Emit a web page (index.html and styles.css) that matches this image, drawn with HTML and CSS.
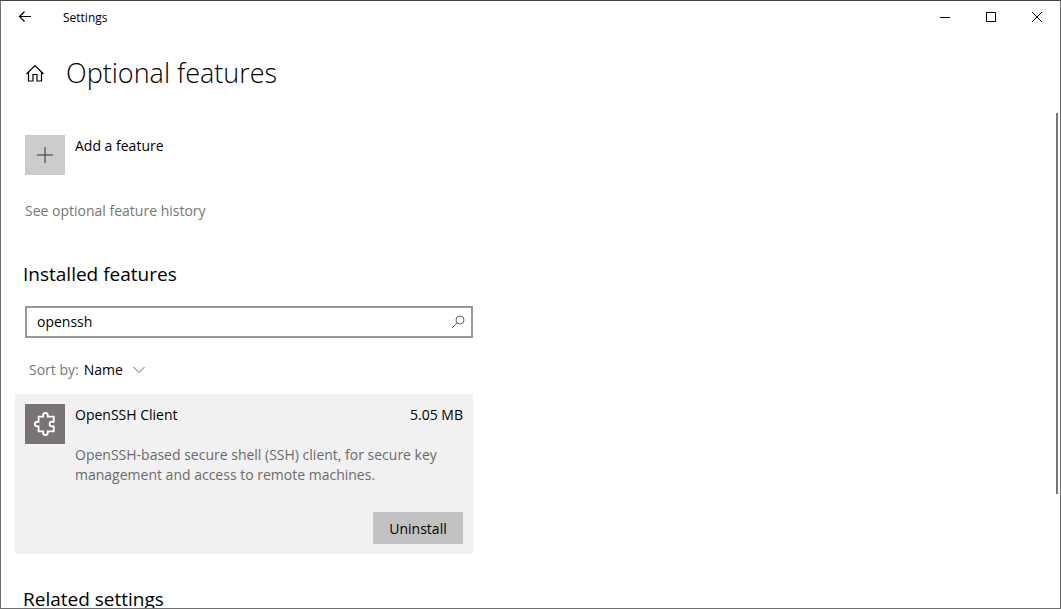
FILE: index.html
```html
<!DOCTYPE html>
<html lang="en">
<head>
<meta charset="utf-8">
<title>Settings</title>
<link rel="stylesheet" href="styles.css">
</head>
<body>
<div class="window">
  <header class="titlebar">
    <button class="back" aria-label="Back">
      <svg width="14" height="12" viewBox="0 0 14 12"><path d="M13 5.500H1.500M6.500 .5L1.500 5.500L6.500 10.500"/></svg>
    </button>
    <span class="app-name">Settings</span>
    <div class="caption-buttons">
      <button class="caption" aria-label="Minimize"><svg width="10" height="10" viewBox="0 0 10 10"><path d="M0 5.500H10"/></svg></button>
      <button class="caption" aria-label="Maximize"><svg width="10" height="10" viewBox="0 0 10 10"><path d="M.5 .5H9.500V9.500H.5Z"/></svg></button>
      <button class="caption" aria-label="Close"><svg width="10" height="10" viewBox="0 0 10 10"><path d="M0 0L10 10M10 0L0 10"/></svg></button>
    </div>
  </header>

  <div class="page-head">
    <button class="home" aria-label="Home">
      <svg width="20" height="18" viewBox="0 0 20 18"><path d="M1.500 10L10 1.500L18.500 10M3.500 8.500V17H8V10.500H12V17H16.500V8.500"/></svg>
    </button>
    <h1 class="title">Optional features</h1>
  </div>

  <div class="body">
    <main class="content">
      <button class="add-feature">
        <span class="tile tile-add"><svg width="16" height="16" viewBox="0 0 16 16"><path d="M0 8H16M8 0V16"/></svg></span>
        <span class="tile-label">Add a feature</span>
      </button>
      <a class="history" href="#">See optional feature history</a>

      <h2 class="section-title">Installed features</h2>
      <div class="search">
        <input class="search-input" type="text" value="openssh" aria-label="Search installed features">
        <button class="search-button" aria-label="Search">
          <svg width="14" height="14" viewBox="0 0 14 14"><circle cx="9" cy="5" r="4"/><path d="M6.200 7.800L1 13"/></svg>
        </button>
      </div>
      <div class="sort">
        <label class="sort-label" for="sort">Sort by:</label>
        <select class="sort-select" id="sort"><option>Name</option></select>
        <svg class="chevron" width="12" height="8" viewBox="0 0 12 8"><path d="M.5 1L6 6.500L11.500 1"/></svg>
      </div>

      <article class="feature">
        <span class="tile tile-feature">
          <svg width="22" height="26" viewBox="0 0 24 28"><path d="M5 6H10V4.500A2.500 2.500 0 0 1 15 4.500V6H21.500V11.500H19.500A2.500 2.500 0 0 0 19.500 16.500H21.500V22H15V23.500A2.500 2.500 0 0 1 10 23.500V22H5V16.500H3.500A2.500 2.500 0 0 1 3.500 11.500H5Z"/></svg>
        </span>
        <div class="feature-info">
          <div class="feature-head"><span>OpenSSH Client</span><span>5.05 MB</span></div>
          <p class="description">OpenSSH-based secure shell (SSH) client, for secure key management and access to remote machines.</p>
          <button class="uninstall">Uninstall</button>
        </div>
      </article>

      <h2 class="section-title related">Related settings</h2>
    </main>
    <div class="scroll-track"><div class="scroll-thumb"></div></div>
  </div>
</div>
</body>
</html>
```
FILE: styles.css
```css
* {
  box-sizing: border-box;
}

body {
  margin: 0;
  font: 14px/20px "Segoe UI", "Open Sans", "Noto Sans", sans-serif;
  color: #000;
}

button,
input,
select {
  margin: 0;
  padding: 0;
  border: 0;
  background: none;
  color: inherit;
  font: inherit;
}

svg {
  display: block;
  flex: none;
  fill: none;
  stroke: #000;
}

.window {
  display: flex;
  flex-direction: column;
  height: 100vh;
  overflow: hidden;
  border: 1px solid #707070;
  border-top-color: #454344;
  background: #fff;
}

.titlebar {
  display: flex;
  flex: none;
  align-items: center;
  height: 32px;
}

.back {
  display: grid;
  place-items: center;
  width: 48px;
  height: 32px;
}

.back svg,
.home svg {
  stroke-width: 1.2;
}

.app-name {
  margin-left: 14px;
  padding-top: 2px;
  font-size: 12px;
}

.caption-buttons {
  display: flex;
  margin-left: auto;
}

.caption {
  display: grid;
  place-items: center;
  width: 46px;
  height: 32px;
}

.page-head {
  display: flex;
  flex: none;
  align-items: center;
  gap: 21px;
  height: 80px;
  padding-left: 24px;
}

.title {
  margin: 0;
  font-size: 27px;
  font-weight: 300;
  line-height: 36px;
}

.body {
  display: flex;
  flex: 1;
  min-height: 0;
}

.content {
  flex: 1;
  min-width: 0;
  max-width: 472px;
  padding: 22px 0 0 14px;
  overflow: hidden;
}

.add-feature {
  display: flex;
  gap: 10px;
  margin-left: 10px;
  text-align: left;
}

.tile-label {
  padding-top: 1px;
}

.tile {
  display: grid;
  flex: none;
  place-items: center;
  width: 40px;
  height: 40px;
}

.tile-add {
  background: #ccc;
}

.tile-add svg {
  stroke: #333;
}

.tile-feature {
  background: #7a7373;
}

.tile-feature svg {
  stroke: #fff;
  stroke-width: 2;
}

.history {
  display: block;
  width: fit-content;
  margin: 26px 0 0 10px;
  color: #767676;
  text-decoration: none;
}

.section-title {
  margin: 40px 0 0 8px;
  font-size: 19px;
  font-weight: 400;
  line-height: 26px;
}

.search {
  display: flex;
  height: 32px;
  margin: 19px 0 0 10px;
  border: 2px solid #999;
}

.search-input {
  flex: 1;
  min-width: 0;
  padding-left: 10px;
  outline: 0;
}

.search-button {
  display: grid;
  place-items: center;
  width: 26px;
}

.search-button svg,
.chevron {
  stroke: #666;
}

.sort {
  display: flex;
  align-items: center;
  gap: 5px;
  margin: 22px 0 0 14px;
}

.sort-label {
  color: #767676;
}

.sort-select {
  width: 44px;
  appearance: none;
}

.feature {
  display: flex;
  gap: 10px;
  margin-top: 14px;
  padding: 10px;
  background: #f1f1f1;
}

.feature-info {
  display: flex;
  flex: 1;
  flex-direction: column;
  min-width: 0;
  padding-top: 1px;
}

.feature-head {
  display: flex;
  justify-content: space-between;
}

.description {
  margin: 20px 0 27px;
  color: #6b6b6b;
}

.uninstall {
  align-self: flex-end;
  width: 90px;
  height: 32px;
  padding-top: 1px;
  background: #c2c2c2;
}

.related {
  margin-top: 32px;
}

.scroll-track {
  width: 4px;
  margin-left: auto;
}

.scroll-thumb {
  width: 2px;
  height: 77%;
  background: #767676;
}
```
